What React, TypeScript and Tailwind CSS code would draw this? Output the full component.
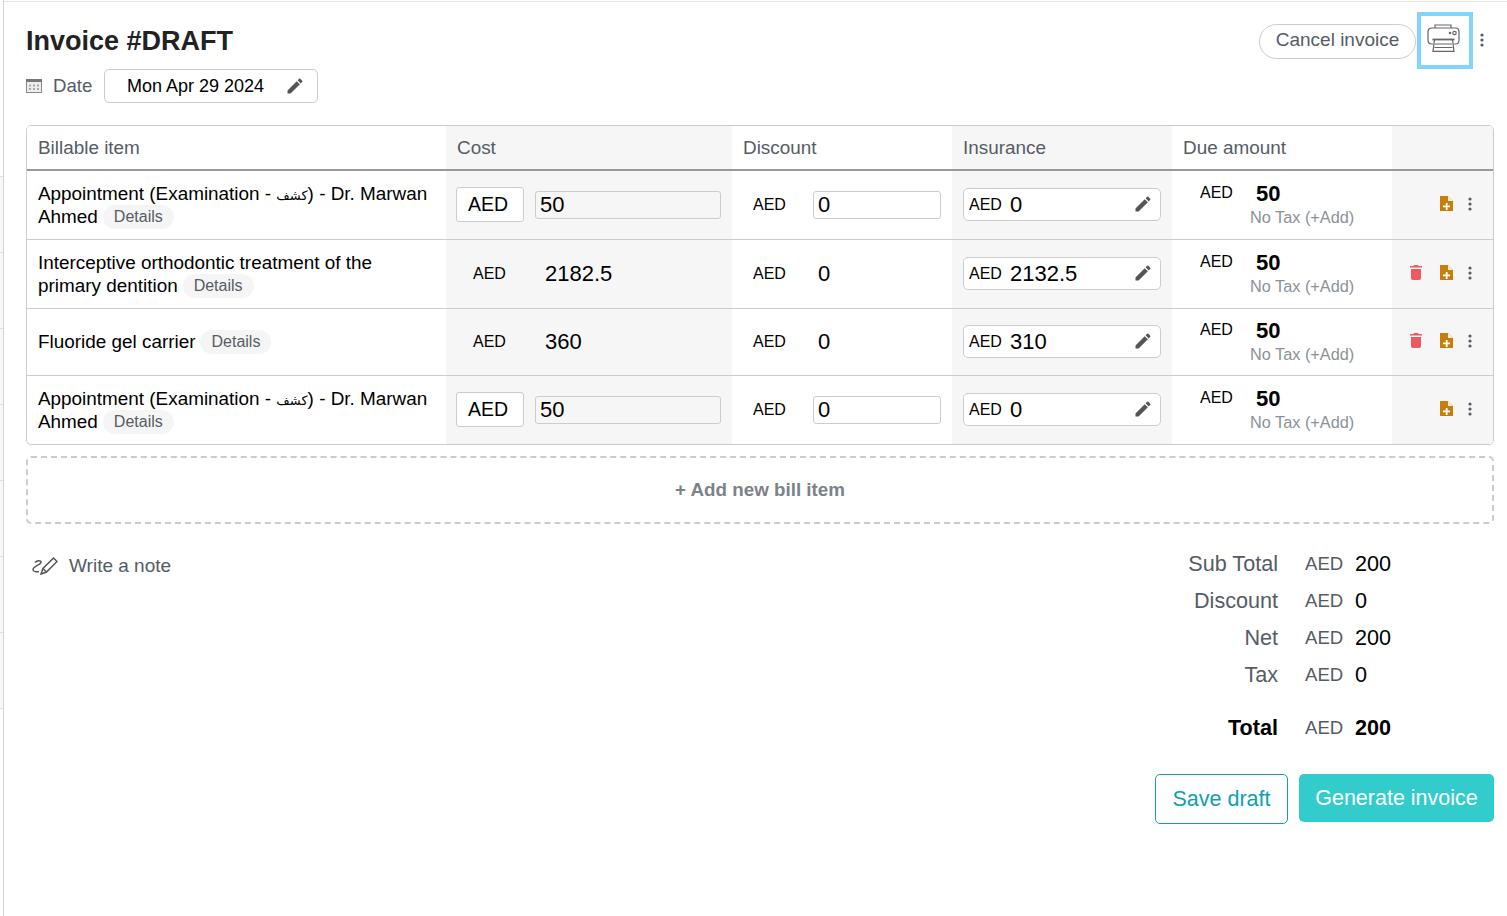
import React from "react";

const cols = "grid grid-cols-[419px_286px_220px_220px_220px_101px]";

const Pencil = ({ className }: { className: string }) => (
  <svg viewBox="0 0 24 24" className={className} fill="currentColor">
    <path d="M3 17.25V21h3.75L17.81 9.94l-3.75-3.75L3 17.25zM20.71 7.04a1 1 0 0 0 0-1.41l-2.34-2.34a1 1 0 0 0-1.41 0l-1.83 1.83 3.75 3.75 1.83-1.83z" />
  </svg>
);

const Dots = () => (
  <svg viewBox="0 0 4 14" className="w-[4px] h-[14px] text-[#555c66]" fill="currentColor">
    <circle cx="2" cy="2" r="1.6" />
    <circle cx="2" cy="7" r="1.6" />
    <circle cx="2" cy="12" r="1.6" />
  </svg>
);

const Trash = () => (
  <svg viewBox="0 0 12 15" className="w-[12px] h-[15px] text-[#ec5a62]" fill="currentColor">
    <path d="M4 0h4l.6 1H12v1.600H0V1h3.400L4 0z" />
    <path d="M1 4h10v9a2 2 0 0 1-2 2H3a2 2 0 0 1-2-2V4z" />
  </svg>
);

const FileAdd = () => (
  <svg viewBox="0 0 13 15" className="w-[13px] h-[15px]">
    <path d="M0 0h8l5 5v10H0z" fill="#c77f0a" />
    <path d="M8 0l5 5H8z" fill="#fbeed6" />
    <path d="M5.800 7h1.800v2.500H10v1.800H7.600V14H5.800v-2.700H3V9.500h2.800z" fill="#fff" />
  </svg>
);

const Printer = () => (
  <svg viewBox="0 0 33 28" className="w-[33px] h-[28px] text-[#666]" fill="none" stroke="currentColor" strokeWidth="1.2">
    <path d="M8 4V1h16v3" />
    <path d="M6 20H4.500A3.500 3.500 0 0 1 1 16.500v-9A3.500 3.500 0 0 1 4.500 4h24A3.500 3.500 0 0 1 32 7.500v9a3.500 3.500 0 0 1-3.500 3.500H27" />
    <path d="M6 27.300l1.500-11.800h18L27 27.300z" fill="#fff" />
    <path d="M5.500 15.500h22" strokeWidth="1.800" />
    <path d="M8 20h17M7.500 23.500h18" />
    <circle cx="27.500" cy="9" r="1.700" />
    <circle cx="23" cy="9" r="0.700" fill="currentColor" />
  </svg>
);

const Calendar = () => (
  <svg viewBox="0 0 16 14" className="w-[16px] h-[14px]">
    <rect x="0.500" y="0.500" width="15" height="13" fill="#eee" stroke="#888" />
    <rect x="0" y="0" width="16" height="3" fill="#777" />
    <path d="M3 5.500h2v2H3zM7 5.500h2v2H7zM11 5.500h2v2h-2zM3 9h2v2H3zM7 9h2v2H7zM11 9h2v2h-2z" fill="#aaa" />
  </svg>
);

const NoteIcon = () => (
  <svg viewBox="0 0 26 18" className="w-[26px] h-[18px] text-[#555]" fill="none" stroke="currentColor" strokeWidth="1.500">
    <path d="M3 5.500C5 3 9.500 3 9 5.500 8.500 8 1 9 1 12.500c0 2.500 4 2.500 6 2" />
    <path d="M9 17l2-5.500L21.500 1l3.500 3.500L14.500 15z" />
    <path d="M11 11.500l3.500 3.500" />
  </svg>
);

const Details = () => (
  <span className="inline-flex items-center h-[24px] px-[11px] ml-[5px] rounded-full bg-[#f5f5f5] text-[#555c66] text-[16px] leading-none">
    Details
  </span>
);

const Aed = ({ className }: { className: string }) => (
  <span className={`text-[16px] text-black ${className}`}>AED</span>
);

const InsuranceBox = ({ value }: { value: string }) => (
  <div className="flex items-center w-[198px] h-[33px] mb-[2px] border border-[#ccc] rounded-[5px] bg-white pl-[5px] pr-[7px]">
    <span className="text-[16px] text-black w-[41px] pt-px">AED</span>
    <span className="text-[22px] text-black">{value}</span>
    <Pencil className="w-[20px] h-[20px] ml-auto text-[#555]" />
  </div>
);

const DueCell = ({ compact }: { compact?: boolean }) => (
  <div className={`flex items-start bg-white pl-[28px] ${compact ? "pt-[9px]" : "pt-[10px]"}`}>
    <span className="text-[16px] text-black w-[56px] leading-[22px] pt-px">AED</span>
    <div className="-ml-[6px] flex flex-col">
      <span className="pl-[6px] text-[22px] font-bold text-black leading-[25px]">50</span>
      <span className="text-[16.3px] text-[#8a9199] leading-[22px]">No Tax (+Add)</span>
    </div>
  </div>
);

const Actions = ({ trash }: { trash?: boolean }) => (
  <div className="flex items-center bg-[#f6f6f6] pl-[18px] pb-[3px]">
    <div className="w-[30px] flex justify-start">{trash && <Trash />}</div>
    <FileAdd />
    <div className="ml-[15px] flex">
      <Dots />
    </div>
  </div>
);

const EditableCost = () => (
  <div className="flex items-center bg-[#f6f6f6] pl-[10px]">
    <div className="flex items-center w-[68px] h-[35px] mb-px pl-[11px] bg-white border border-[#ccc] rounded-[3px] text-[19.5px] text-black">
      AED
    </div>
    <div className="flex items-center w-[186px] h-[28px] ml-[11px] pl-[4px] pb-[2px] bg-[#f6f6f6] border border-[#ccc] rounded-[3px] text-[22px] text-black">
      50
    </div>
  </div>
);

const EditableDiscount = () => (
  <div className="flex items-center bg-white pl-[21px]">
    <Aed className="w-[60px]" />
    <div className="flex items-center w-[128px] h-[28px] pl-[4px] pb-[2px] bg-white border border-[#ccc] rounded-[3px] text-[22px] text-black">
      0
    </div>
  </div>
);

const StaticCost = ({ value }: { value: string }) => (
  <div className="flex items-center bg-[#f6f6f6] pl-[27px]">
    <Aed className="w-[72px]" />
    <span className="text-[22px] text-black pb-[2px]">{value}</span>
  </div>
);

const StaticDiscount = () => (
  <div className="flex items-center bg-white pl-[21px]">
    <Aed className="w-[65px]" />
    <span className="text-[22px] text-black pb-[2px]">0</span>
  </div>
);

const Appointment = () => (
  <div className="flex items-center px-[11px] text-[18.9px] leading-[23px] text-black">
    <div>
      <div className="h-[23px]">
        Appointment (Examination -{" "}
        <span className="font-['DejaVu_Sans',sans-serif] text-[13px] leading-none">كشف</span>) - Dr. Marwan
      </div>
      <div className="flex items-center h-[23px]">
        Ahmed
        <Details />
      </div>
    </div>
  </div>
);

const Row = ({ children, last, h }: { children: React.ReactNode; last?: boolean; h: string }) => (
  <div className={`${cols} ${h} ${last ? "" : "border-b border-[#ccc]"}`}>{children}</div>
);

const headers = ["Billable item", "Cost", "Discount", "Insurance", "Due amount", ""];

const totals = [
  { label: "Sub Total", value: "200" },
  { label: "Discount", value: "0" },
  { label: "Net", value: "200" },
  { label: "Tax", value: "0" },
];

const sideRows = [0, 1, 2, 3, 4, 5, 6];

export default function App() {
  return (
    <div className="h-[916px] overflow-hidden bg-white font-['Liberation_Sans',Arial,sans-serif]">
      <div className="flex h-full">
        <div className="w-[4px] shrink-0 border-r border-[#d4d4d4] bg-white pt-[176px]">
          {sideRows.map((r) => (
            <div key={r} className="h-[76px] bg-[#f8f8f8] border-t border-[#ddd] last:h-[77px] last:border-b" />
          ))}
        </div>
        <div className="flex-1 border-t border-[#e5e5e5] mt-px pl-[22px] pr-[13px]">
          <div className="flex justify-between h-[123px]">
            <div>
              <h1 className="mt-[21px] text-[27px] leading-[36px] font-bold text-[#222]">Invoice #DRAFT</h1>
              <div className="flex items-center mt-[10px]">
                <Calendar />
                <span className="ml-[11px] text-[18.6px] text-[#555c66] w-[51px]">Date</span>
                <div className="flex items-center w-[214px] h-[34px] pl-[22px] pr-[12px] border border-[#ccc] rounded-[5px] text-[18px] text-black">
                  Mon Apr 29 2024
                  <Pencil className="w-[20px] h-[20px] ml-auto text-[#555]" />
                </div>
              </div>
            </div>
            <div className="flex items-start">
              <button className="mt-[22px] w-[157px] h-[35px] pb-[3px] border border-[#ccc] rounded-full text-[19px] text-[#555c66]">
                Cancel invoice
              </button>
              <div className="flex items-start w-[56px] h-[57px] mt-[10px] ml-[1px] pl-[6px] pt-[8px] border-[4px] border-[#82d4fd]">
                <Printer />
              </div>
              <div className="flex mt-[31px] ml-[7px] mr-[10px]">
                <Dots />
              </div>
            </div>
          </div>

          <div className="border border-[#ccc] rounded-[5px] overflow-hidden">
            <div className={`${cols} h-[45px] border-b-2 border-[#999]`}>
              {headers.map((h, i) => (
                <div
                  key={i}
                  className={`flex items-center pl-[11px] pt-[2px] text-[18.9px] text-[#555c66] ${i % 2 === 1 ? "bg-[#f6f6f6]" : "bg-white"}`}
                >
                  {h}
                </div>
              ))}
            </div>
            <Row h="h-[69px]">
              <Appointment />
              <EditableCost />
              <EditableDiscount />
              <div className="flex items-center bg-[#f6f6f6] pl-[11px]">
                <InsuranceBox value="0" />
              </div>
              <DueCell />
              <Actions />
            </Row>
            <Row h="h-[69px]">
              <div className="flex items-center px-[11px] text-[18.9px] leading-[23px] text-black">
                <div>
                  <div className="h-[23px]">Interceptive orthodontic treatment of the</div>
                  <div className="flex items-center h-[23px]">
                    primary dentition
                    <Details />
                  </div>
                </div>
              </div>
              <StaticCost value="2182.5" />
              <StaticDiscount />
              <div className="flex items-center bg-[#f6f6f6] pl-[11px]">
                <InsuranceBox value="2132.5" />
              </div>
              <DueCell />
              <Actions trash />
            </Row>
            <Row h="h-[67px]">
              <div className="flex items-center px-[11px] text-[18.9px] text-black">
                Fluoride gel carrier
                <Details />
              </div>
              <StaticCost value="360" />
              <StaticDiscount />
              <div className="flex items-center bg-[#f6f6f6] pl-[11px]">
                <InsuranceBox value="310" />
              </div>
              <DueCell compact />
              <Actions trash />
            </Row>
            <Row h="h-[68px]" last>
              <Appointment />
              <EditableCost />
              <EditableDiscount />
              <div className="flex items-center bg-[#f6f6f6] pl-[11px]">
                <InsuranceBox value="0" />
              </div>
              <DueCell />
              <Actions />
            </Row>
          </div>

          <div className="flex items-center justify-center h-[68px] mt-[11px] border-2 border-dashed border-[#ccc] rounded-[5px] text-[18.8px] font-bold text-[#7b8288]">
            + Add new bill item
          </div>

          <div className="flex justify-between mt-[22px]">
            <div className="flex items-center h-[40px] pl-[6px] self-start">
              <NoteIcon />
              <span className="ml-[11px] text-[19px] text-[#555c66]">Write a note</span>
            </div>
            <div className="flex flex-col items-end">
              <div className="w-[314px]">
                {totals.map((t) => (
                  <div key={t.label} className="flex items-center h-[37px]">
                    <span className="w-[98px] text-right text-[21.6px] text-[#555c66]">{t.label}</span>
                    <span className="ml-[27px] w-[50px] pb-[2px] text-[18.6px] text-[#555c66]">AED</span>
                    <span className="text-[21.6px] text-black">{t.value}</span>
                  </div>
                ))}
                <div className="flex items-center h-[37px] mt-[16px]">
                  <span className="w-[98px] text-right text-[21.6px] font-bold text-black">Total</span>
                  <span className="ml-[27px] w-[50px] pb-[2px] text-[18.6px] text-[#555c66]">AED</span>
                  <span className="text-[21.6px] font-bold text-black">200</span>
                </div>
              </div>
              <div className="flex items-start mt-[27px]">
                <button className="w-[133px] h-[50px] border border-[#0f9fb3] rounded-[5px] text-[21.5px] text-[#0f9fb3]">
                  Save draft
                </button>
                <button className="w-[195px] h-[48px] ml-[11px] rounded-[5px] bg-[#33cccc] text-[21.5px] text-white">
                  Generate invoice
                </button>
              </div>
            </div>
          </div>
        </div>
      </div>
    </div>
  );
}
